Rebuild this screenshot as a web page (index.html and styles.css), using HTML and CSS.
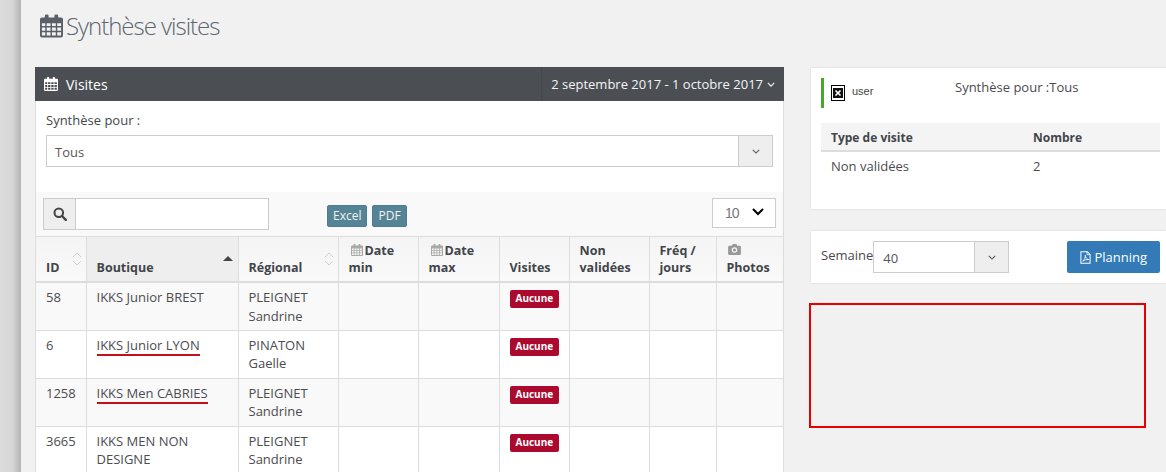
FILE: index.html
```html
<!DOCTYPE html>
<html lang="fr">
<head>
<meta charset="utf-8">
<title>Synthèse visites</title>
<link rel="stylesheet" href="styles.css">
</head>
<body>
<svg class="defs" width="0" height="0" aria-hidden="true">
  <symbol id="cal" viewBox="0 0 24 24">
    <path fill-rule="evenodd" d="M2 3h3V1.500a1.500 1.500 0 0 1 1.500-1.500h1A1.500 1.500 0 0 1 9 1.500V3h6V1.500A1.500 1.500 0 0 1 16.500 0h1A1.500 1.500 0 0 1 19 1.500V3h3a2 2 0 0 1 2 2v17a2 2 0 0 1-2 2H2a2 2 0 0 1-2-2V5a2 2 0 0 1 2-2zM2 9v3h3.500V9zm5 0v3h4V9zm5.500 0v3h4V9zm5.500 0v3h4V9zM2 13.500V17h3.500v-3.500zm5 0V17h4v-3.500zm5.500 0V17h4v-3.500zm5.500 0V17h4v-3.500zM2 18.500V22h3.500v-3.500zm5 0V22h4v-3.500zm5.500 0V22h4v-3.500zm5.500 0V22h4v-3.500z"/>
  </symbol>
</svg>
<div class="page">
  <div class="rail"></div>
  <main class="main">
    <h1 class="title"><svg class="title-ico"><use href="#cal"/></svg>Synthèse visites</h1>
    <div class="columns">
      <section class="panel">
        <header class="panel-head">
          <div class="panel-title"><svg class="head-ico"><use href="#cal"/></svg>Visites</div>
          <div class="range">2 septembre 2017 - 1 octobre 2017
            <svg class="range-chev" viewBox="0 0 10 6"><path d="M1 1l4 4 4-4" fill="none" stroke="currentColor" stroke-width="1.400"/></svg>
          </div>
        </header>
        <div class="filter">
          <div class="filter-label">Synthèse pour :</div>
          <div class="select select-wide">
            <span class="select-val">Tous</span>
            <span class="select-btn"><svg class="chev" viewBox="0 0 10 6"><path d="M1 1l4 4 4-4" fill="none" stroke="currentColor" stroke-width="1.300"/></svg></span>
          </div>
        </div>
        <div class="toolbar">
          <div class="search">
            <span class="search-btn"><svg class="search-ico" viewBox="0 0 14 14"><circle cx="5.800" cy="5.800" r="4.300" fill="none" stroke="currentColor" stroke-width="2"/><path d="M9 9l3.800 3.800" stroke="currentColor" stroke-width="2.400" stroke-linecap="round"/></svg></span>
            <span class="search-input"></span>
          </div>
          <div class="tools">
            <span class="tool">Excel</span>
            <span class="tool">PDF</span>
          </div>
          <div class="len">10<svg class="len-chev" viewBox="0 0 12 8"><path d="M1 1l5 5 5-5" fill="none" stroke="currentColor" stroke-width="2"/></svg></div>
        </div>
        <table class="grid">
          <colgroup>
            <col class="c1"><col class="c2"><col class="c3"><col class="c4"><col class="c5"><col class="c6"><col class="c7"><col class="c8"><col class="c9">
          </colgroup>
          <thead>
            <tr>
              <th class="sortable">ID<svg class="sort"  viewBox="0 0 10 16"><path d="M1 6l4-4 4 4M1 10l4 4 4-4" fill="none" stroke="#d0d0d0"/></svg></th>
              <th class="sorted">Boutique<span class="sort-up"></span></th>
              <th class="sortable">Régional<svg class="sort" viewBox="0 0 10 16"><path d="M1 6l4-4 4 4M1 10l4 4 4-4" fill="none" stroke="#d0d0d0"/></svg></th>
              <th><svg class="th-ico"><use href="#cal"/></svg>Date min</th>
              <th><svg class="th-ico"><use href="#cal"/></svg>Date max</th>
              <th>Visites</th>
              <th>Non validées</th>
              <th>Fréq / jours</th>
              <th><svg class="cam" viewBox="0 0 14 12"><path fill-rule="evenodd" d="M1.500 2H4l1-2h4l1 2h2.500A1.500 1.500 0 0 1 14 3.500v7a1.500 1.500 0 0 1-1.500 1.500h-11A1.500 1.500 0 0 1 0 10.500v-7A1.500 1.500 0 0 1 1.500 2zM7 3.500a3 3 0 1 0 0 6 3 3 0 0 0 0-6zm0 1.300a1.700 1.700 0 1 1 0 3.400 1.700 1.700 0 0 1 0-3.400z"/></svg><br>Photos</th>
            </tr>
          </thead>
          <tbody>
            <tr class="odd"><td>58</td><td>IKKS Junior BREST</td><td>PLEIGNET Sandrine</td><td></td><td></td><td><span class="badge">Aucune</span></td><td></td><td></td><td></td></tr>
            <tr><td>6</td><td><span class="spell">IKKS Junior LYON</span></td><td>PINATON Gaelle</td><td></td><td></td><td><span class="badge">Aucune</span></td><td></td><td></td><td></td></tr>
            <tr class="odd"><td>1258</td><td><span class="spell">IKKS Men CABRIES</span></td><td>PLEIGNET Sandrine</td><td></td><td></td><td><span class="badge">Aucune</span></td><td></td><td></td><td></td></tr>
            <tr><td>3665</td><td>IKKS MEN NON DESIGNE</td><td>PLEIGNET Sandrine</td><td></td><td></td><td><span class="badge">Aucune</span></td><td></td><td></td><td></td></tr>
          </tbody>
        </table>
      </section>
      <aside class="side">
        <div class="card card-user">
          <div class="user-row">
            <div class="user">
              <span class="broken"><svg viewBox="0 0 14 16" width="14" height="16"><rect x="0.500" y="0.500" width="13" height="15" fill="#fff" stroke="#000"/><rect x="2" y="3" width="10" height="10" fill="#111"/><path d="M4.500 5.500l5 5M9.500 5.500l-5 5" stroke="#fff" stroke-width="1.600"/></svg></span>
              <span class="user-name">user</span>
            </div>
            <div class="synth">Synthèse pour :Tous</div>
          </div>
          <table class="mini">
            <thead><tr><th class="m1">Type de visite</th><th>Nombre</th></tr></thead>
            <tbody><tr><td>Non validées</td><td>2</td></tr></tbody>
          </table>
        </div>
        <div class="card card-week">
          <span class="week-label">Semaine</span>
          <div class="select select-week">
            <span class="select-val">40</span>
            <span class="select-btn"><svg class="chev" viewBox="0 0 10 6"><path d="M1 1l4 4 4-4" fill="none" stroke="currentColor" stroke-width="1.300"/></svg></span>
          </div>
          <span class="plan"><svg class="pdf" viewBox="0 0 12 14"><path d="M1 .600h7l3 3V13.400H1z" fill="none" stroke="currentColor" stroke-width="1.100"/><path d="M7.700.600v3.300H11M3 11c2-1.500 3-4 2.700-6.500C6 7 7.500 9 9.500 9.300 7 9 4.500 10 3 11z" fill="none" stroke="currentColor" stroke-width=".9"/></svg>Planning</span>
        </div>
        <div class="red-box"></div>
      </aside>
    </div>
  </main>
</div>
</body>
</html>
```
FILE: styles.css
```css
* { box-sizing: border-box; }
html, body { margin: 0; height: 472px; overflow: hidden; }
body { font-family: "Open Sans", "Liberation Sans", sans-serif; font-size: 13px; color: #44474c; background: #f1f1f1; }
.defs { position: absolute; }
.page { display: flex; height: 472px; overflow: hidden; }
.rail { width: 21px; flex: none; background: linear-gradient(90deg, #dcdcdc 0, #d6d6d6 60%, #b4b4b4 100%); }
.main { flex: 1; min-width: 0; padding: 0 0 0 14px; }
.title { margin: 0; height: 67px; padding: 8px 0 0 5px; display: flex; align-items: flex-start; font-size: 24px; font-weight: 300; line-height: 36px; letter-spacing: -1.02px; color: #5c6570; }
.title-ico { width: 23px; height: 24px; margin: 6px 3px 0 0; fill: #59606a; flex: none; }
.columns { display: flex; align-items: flex-start; }
.panel { width: 749px; flex: none; background: #fff; border: 1px solid #dcdcdc; border-top: 0; }
.panel-head { height: 34px; margin: 0 -1px; background: #4b4f54; color: #fff; display: flex; justify-content: space-between; align-items: stretch; }
.panel-title { display: flex; align-items: center; padding-left: 9px; font-size: 14px; }
.head-ico { width: 14px; height: 14px; fill: #fff; margin-right: 8px; }
.range { display: flex; align-items: center; padding: 0 9px 0 9px; border-left: 1px solid #45494e; font-size: 13px; color: #f4f4f4; }
.range-chev { width: 8px; height: 5px; margin-left: 4px; }
.filter { height: 91px; padding: 10px 10px 0 10px; }
.filter-label { line-height: 18px; margin-bottom: 6px; }
.select { display: flex; height: 32px; border: 1px solid #ccc; background: #fff; }
.select-wide { width: 727px; }
.select-val { flex: 1; padding-left: 8px; line-height: 32px; color: #555; }
.select-btn { width: 34px; flex: none; background: #eee; border-left: 1px solid #ccc; display: flex; align-items: center; justify-content: center; color: #555; }
.chev { width: 8px; height: 5px; }
.toolbar { height: 45px; background: #f9f9f9; display: flex; align-items: flex-start; padding: 6px 7px 0 7px; border-bottom: 1px solid #ddd; }
.search { display: flex; width: 226px; height: 32px; border: 1px solid #ccc; background: #fff; }
.search-btn { width: 32px; background: #eee; border-right: 1px solid #ccc; display: flex; align-items: center; justify-content: center; color: #444; }
.search-ico { width: 14px; height: 14px; }
.search-input { flex: 1; }
.tools { display: flex; gap: 5px; margin: 7px 0 0 58px; }
.tool { height: 22px; padding: 0 5px; background: #568497; border: 1px solid #4f7b8e; border-radius: 2px; color: #f2f2f2; font-size: 12px; line-height: 20px; }
.len { margin-left: auto; width: 64px; height: 30px; border: 1px solid #ccc; background: #fff; display: flex; align-items: center; padding-left: 12px; color: #777; font: 14px "Liberation Sans", sans-serif; letter-spacing: -1px; }
.len-chev { width: 12px; height: 8px; margin-left: 13px; color: #000; margin-top: -2px; }
.grid { width: 747px; table-layout: fixed; border-collapse: collapse; }
.c1 { width: 50px; } .c2 { width: 152px; } .c3 { width: 100px; } .c4 { width: 80px; } .c5 { width: 81px; }
.c6 { width: 70px; } .c7 { width: 80px; } .c8 { width: 67px; } .c9 { width: 67px; }
.grid th { position: relative; height: 45px; padding: 4px 10px 5px 10px; vertical-align: bottom; text-align: left; font-weight: 700; font-size: 12.500px; line-height: 17px; color: #42454a; background: linear-gradient(#f4f4f4, #f9f9f9); border-right: 1px solid #ddd; border-bottom: 2px solid #ddd; }
.grid th:last-child, .grid td:last-child { border-right: 0; }
.grid th.sorted { background: #eee; }
.sort { position: absolute; right: 4px; top: 14px; width: 10px; height: 16px; }
.sort-up { position: absolute; right: 5px; top: 19px; border: 5px solid transparent; border-top: 0; border-bottom: 5px solid #444; }
.th-ico { width: 12px; height: 12px; fill: #a9a9a9; margin: 0 2px -1px 2px; }
.cam { width: 13px; height: 11px; fill: #999; margin-left: 1px; }
.grid td { height: 48px; padding: 5px 10px 4px 10px; vertical-align: top; line-height: 18.500px; font-size: 13px; color: #4c4c50; border-right: 1px solid #ddd; border-bottom: 1px solid #ddd; }
.grid tr.odd td { background: #f9f9f9; }
.spell { border-bottom: 2px solid #c4101c; padding-bottom: 0; }
.badge { display: inline-block; height: 18px; padding: 0 6px; background: #ab0a2e; border-radius: 2px; color: #fff; font-size: 10px; font-weight: 700; line-height: 17px; }
.side { flex: 1; margin-left: 27px; min-width: 0; padding-top: 1px; }
.card { background: #fff; box-shadow: 0 0 2px rgba(0,0,0,.12); }
.card-user { height: 141px; padding: 10px 0 0 10px; }
.user-row { display: flex; height: 45px; }
.user { width: 134px; height: 30px; border-left: 3px solid #4aa52e; display: flex; align-items: center; padding-left: 7px; }
.broken { width: 14px; height: 16px; display: block; }
.broken svg { display: block; }
.user-name { margin: 0 0 4px 7px; font: 11px "Liberation Sans", sans-serif; color: #444; }
.synth { line-height: 18px; color: #4a4a4e; }
.mini { width: 339px; border-collapse: collapse; }
.mini th { height: 28px; padding: 1px 10px 0; text-align: left; font-size: 12px; background: #f4f4f4; border-bottom: 2px solid #ddd; color: #42454a; }
.mini .m1 { width: 202px; }
.mini td { height: 30px; padding: 0 10px 2px; font-size: 13px; color: #4c4c50; }
.card-week { height: 52px; margin-top: 22px; display: flex; align-items: flex-start; padding: 10px 0 0 10px; }
.week-label { line-height: 28px; color: #4a4a4e; }
.select-week { width: 136px; }
.select-week .select-val { padding-left: 9px; line-height: 33px; }
.plan { margin-left: 58px; width: 93px; height: 32px; background: #337ab7; border-radius: 2px; color: #fff; display: flex; align-items: center; justify-content: center; font-size: 13px; }
.pdf { width: 11px; height: 13px; margin-right: 3px; }
.red-box { width: 337px; height: 125px; margin: 20px 0 0 -2px; border: 2px solid #e60000; }
```
